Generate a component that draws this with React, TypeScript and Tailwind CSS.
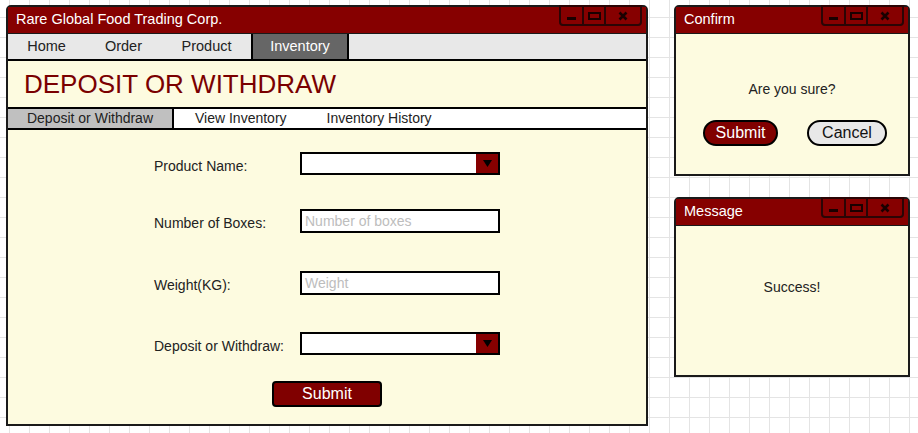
import React from "react";

const font = "font-['Liberation_Sans',Arial,sans-serif]";

function WindowControls() {
  return (
    <div className="absolute right-[4px] top-[-2px] flex h-[21px] overflow-hidden rounded-b-[4px] border-2 border-[#2a0505]">
      <div className="flex w-[23px] items-end justify-center border-r-2 border-[#2a0505] pb-[4px]">
        <div className="h-[3px] w-[9px] bg-[#1a0000]" />
      </div>
      <div className="flex w-[22px] items-center justify-center border-r-2 border-[#2a0505]">
        <div className="h-[8px] w-[13px] border-2 border-[#1a0000]" />
      </div>
      <div className="flex w-[34px] items-center justify-center">
        <svg width="10" height="10" viewBox="0 0 10 10">
          <path d="M1.5 1.5 L8.5 8.5 M8.5 1.5 L1.5 8.5" stroke="#1a0000" strokeWidth="2.6" />
        </svg>
      </div>
    </div>
  );
}

function TitleBar({ title }: { title: string }) {
  return (
    <div className="relative flex h-[27px] shrink-0 items-center border-b border-[#1a1a1a] bg-[#860000] pl-[8px] text-[14.5px] text-white">
      {title}
      <WindowControls />
    </div>
  );
}

function SelectBox() {
  return (
    <div className="flex h-[23px] w-[200px] border-2 border-black bg-white">
      <div className="flex-1" />
      <div className="flex w-[22px] items-center justify-center bg-[#860000]">
        <svg width="9" height="7" viewBox="0 0 9 7">
          <path d="M0 0 H9 L4.5 7 Z" fill="#000" />
        </svg>
      </div>
    </div>
  );
}

function TextBox({ placeholder }: { placeholder: string }) {
  return (
    <div className="flex h-[24px] w-[200px] items-center border-2 border-black bg-white pl-[3px] text-[14px] text-[#bdbdbd]">
      {placeholder}
    </div>
  );
}

function FormRow({ label, children, className }: { label: string; children: React.ReactNode; className?: string }) {
  return (
    <div className={"flex items-center " + (className ?? "")}>
      <span className="w-[146px] pt-[4px] text-[14px] leading-[18px] text-[#222]">{label}</span>
      {children}
    </div>
  );
}

const nav = [
  { label: "Home", w: "w-[77px]" },
  { label: "Order", w: "w-[77px]" },
  { label: "Product", w: "w-[89px]" },
];

export default function App() {
  return (
    <div
      className={`${font} flex h-[433px] w-[918px] gap-[26px] overflow-hidden bg-white bg-[linear-gradient(to_right,#e4e4e4_1px,transparent_1px),linear-gradient(to_bottom,#e4e4e4_1px,transparent_1px)] bg-size-[20px_20px] bg-position-[9px_17px] pl-[6px] pt-[5px]`}
    >
      {/* main window */}
      <div className="flex h-[421px] w-[642px] flex-col rounded-t-[5px] border-2 border-[#1a1a1a] bg-[#fdfbe0]">
        <TitleBar title="Rare Global Food Trading Corp." />
        <div className="flex h-[27px] shrink-0 border-b-2 border-black bg-[#e8e8e8] text-[14.5px] text-[#222]">
          {nav.map((n) => (
            <div key={n.label} className={`flex items-center justify-center pt-[1px] ${n.w}`}>
              {n.label}
            </div>
          ))}
          <div className="flex w-[98px] items-center justify-center border-x-2 border-black bg-[#666666] pt-[1px] text-white">
            Inventory
          </div>
        </div>
        <div className="flex h-[46px] shrink-0 items-center pl-[16px] text-[26px] text-[#7a0000]">
          DEPOSIT OR WITHDRAW
        </div>
        <div className="flex h-[23px] shrink-0 border-y-2 border-black bg-white text-[14px] text-[#222]">
          <div className="flex w-[166px] items-center justify-center border-r-2 border-black bg-[#c0c0c0]">
            Deposit or Withdraw
          </div>
          <div className="flex items-center pl-[21px]">View Inventory</div>
          <div className="flex items-center pl-[40px]">Inventory History</div>
        </div>
        <div className="flex flex-1 flex-col pl-[146px] pt-[22px]">
          <FormRow label="Product Name:">
            <SelectBox />
          </FormRow>
          <FormRow label="Number of Boxes:" className="mt-[34px]">
            <TextBox placeholder="Number of boxes" />
          </FormRow>
          <FormRow label="Weight(KG):" className="mt-[38px]">
            <TextBox placeholder="Weight" />
          </FormRow>
          <FormRow label="Deposit or Withdraw:" className="mt-[37px]">
            <SelectBox />
          </FormRow>
          <button className="ml-[118px] mt-[26px] flex h-[26px] w-[110px] items-center justify-center rounded-[4px] border-2 border-black bg-[#800000] text-[16px] text-white">
            Submit
          </button>
        </div>
      </div>

      {/* dialogs */}
      <div className="flex w-[236px] flex-col gap-[21px]">
        <div className="flex h-[171px] flex-col rounded-t-[5px] border-2 border-[#1a1a1a] bg-[#fdfbe0]">
          <TitleBar title="Confirm" />
          <div className="pt-[45px] text-center text-[14px] text-[#222]">Are you sure?</div>
          <div className="mt-[20px] flex justify-center gap-[29px] pl-[6px]">
            <button className="flex h-[26px] w-[75px] items-center justify-center rounded-full border-2 border-black bg-[#800000] text-[16px] text-white">
              Submit
            </button>
            <button className="flex h-[26px] w-[80px] items-center justify-center rounded-full border-2 border-black bg-[#e8e8e8] text-[16px] text-[#111]">
              Cancel
            </button>
          </div>
        </div>
        <div className="flex h-[180px] flex-col rounded-t-[5px] border-2 border-[#1a1a1a] bg-[#fdfbe0]">
          <TitleBar title="Message" />
          <div className="pt-[51px] text-center text-[14px] text-[#222]">Success!</div>
        </div>
      </div>
    </div>
  );
}
